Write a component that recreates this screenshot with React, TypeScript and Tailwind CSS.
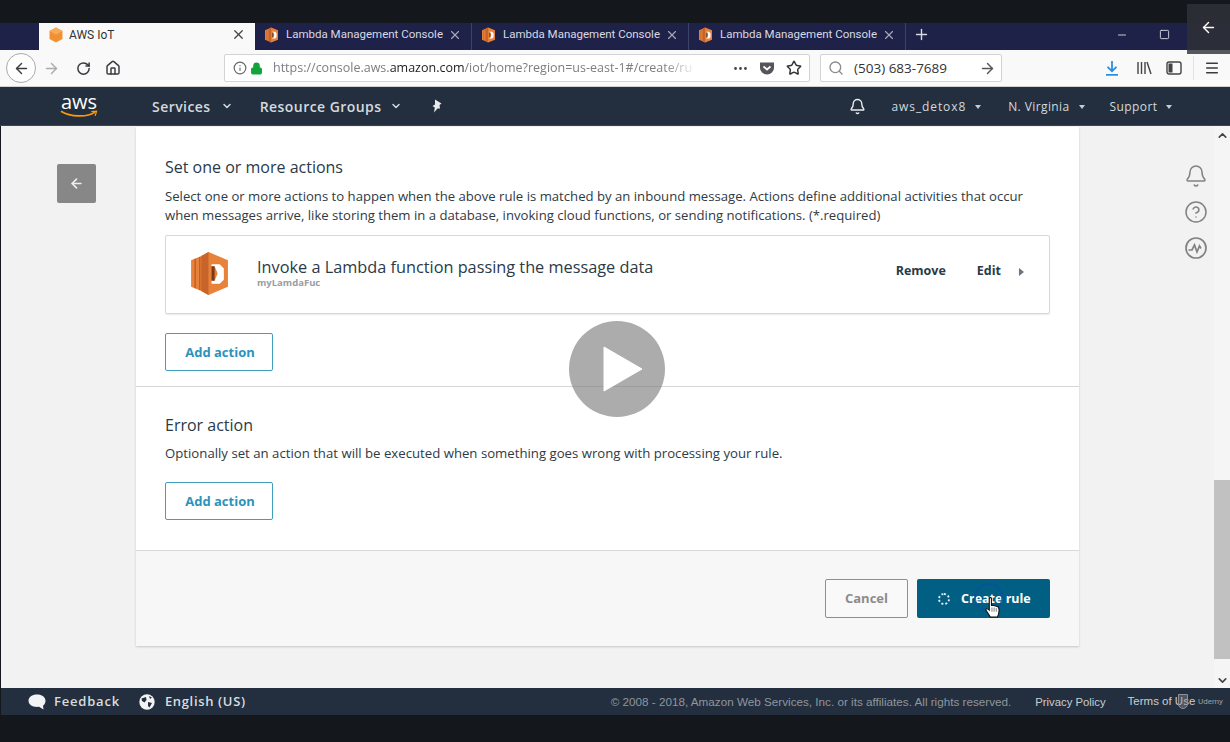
import { ArrowLeft, ArrowRight, Bell, ChevronDown, ChevronUp, HelpCircle, Home, Lock, Menu, MoreHorizontal, Plus, RotateCw, Search, Star, X, Minus, Square, Info } from 'lucide-react';

const ui = "font-['Open_Sans',sans-serif]";
const chrome = "font-['Roboto',sans-serif]";
const legal = "font-['Liberation_Sans',sans-serif]";

function LambdaIcon({ className }: { className?: string }) {
  return (
    <svg viewBox="0 0 36 42" className={className}>
      <path d="M0 8 L10 4 L17 0 L36 8 V34 L17 42 L10 38 L0 34 Z" fill="#e8823a" />
      <path d="M4 6.5 V35.5 M8.5 4.8 V37.2" stroke="#b85a22" strokeWidth="1.2" />
      <path d="M17 0 L10 4 V38 L17 42 Z" fill="#c8642a" />
      <path d="M20 12 H28 L32 16 V27 L28 31 H20 V28 H23 L26 21 L23 14 H20 Z" fill="#fff" />
      <path d="M20 14 H23 V28 H20 Z" fill="#7a3b18" />
    </svg>
  );
}

function BrowserTab({ label }: { label: string }) {
  return (
    <div className="w-[217px] h-full flex items-center pl-[10px] pr-[9px] pb-[4px] border-r border-[#3d4168]">
      <LambdaIcon className="w-[13px] h-[16px] shrink-0" />
      <span className={`ml-[8px] text-[11.5px] text-[#d8d9e2] whitespace-nowrap ${chrome}`}>{label}</span>
      <X size={14} className="ml-auto shrink-0 text-[#a6a8b8]" />
    </div>
  );
}

function NavCaret() {
  return <span className="inline-block ml-[9px] mt-[2px] w-0 h-0 border-x-[3.5px] border-x-transparent border-t-[4px] border-t-[#c8ccd1]" />;
}

function AddAction() {
  return (
    <button className={`w-[108px] h-[38px] pl-[2px] pt-[2px] rounded-[2px] border border-[#3f9fbd] bg-white text-[13px] font-bold text-[#2b93bd] ${ui}`}>
      Add action
    </button>
  );
}

export default function App() {
  return (
    <div className="relative w-[1230px] h-[742px] overflow-hidden bg-[#14171c] flex flex-col">
      {/* Black bar from the video */}
      <div className="h-[23px] shrink-0" />

      {/* Firefox tabs */}
      <div className="h-[27px] shrink-0 bg-[#1e2148] flex items-center">
        <div className="w-[39px]" />
        <div className="w-[216px] h-full bg-[#f9f9fa] flex items-center pl-[9px] pr-[9px] pb-[4px]">
          <svg viewBox="0 0 16 16" className="w-[16px] h-[16px]">
            <path d="M8 0.5 L14.5 4 V12 L8 15.5 L1.5 12 V4 Z" fill="#f29133" />
            <path d="M8 0.5 L14.5 4 L8 7.5 L1.5 4 Z" fill="#f7ab5a" />
          </svg>
          <span className={`ml-[5px] text-[12px] text-[#333] ${chrome}`}>AWS IoT</span>
          <X size={15} className="ml-auto text-[#444]" />
        </div>
        <BrowserTab label="Lambda Management Console" />
        <BrowserTab label="Lambda Management Console" />
        <BrowserTab label="Lambda Management Console" />
        <Plus size={17} className="ml-[7px] mb-[4px] text-[#d8d9e2]" />
        <Minus size={12} className="ml-[186px] mb-[4px] text-[#c9cad6]" />
        <Square size={11} className="ml-[31px] mb-[4px] text-[#d8d9e2]" />
      </div>

      {/* Firefox toolbar */}
      <div className="h-[37px] shrink-0 bg-[#f9f9fa] border-b border-[#cfd0d3] flex items-center text-[#3b3b40]">
        <div className="ml-[6px] w-[30px] h-[30px] rounded-full border border-[#a9a9ad] bg-white flex items-center justify-center">
          <ArrowLeft size={17} />
        </div>
        <ArrowRight size={17} className="ml-[7px] text-[#aaaaae]" />
        <RotateCw size={15} strokeWidth={2.4} className="ml-[16px]" />
        <Home size={16} strokeWidth={2.2} className="ml-[14px]" />
        <div className="ml-[103px] w-[586px] h-[28px] bg-white border border-[#d3d3d6] rounded-[2px] flex items-center pl-[8px]">
          <Info size={14} className="text-[#666]" />
          <Lock size={13} fill="#12a33c" className="ml-[3px] text-[#12a33c]" />
          <span className={`ml-[10px] text-[12.5px] text-[#7d7d82] whitespace-nowrap w-[424px] overflow-hidden [mask-image:linear-gradient(to_right,black_92%,transparent)] ${ui}`}>
            https://console.aws.<span className="text-[#1d1d1f]">amazon.com</span>/iot/home?region=us-east-1#/create/ru
          </span>
          <MoreHorizontal size={17} className="ml-[35px] text-[#444]" />
          <svg viewBox="0 0 16 16" className="ml-[10px] w-[16px] h-[16px]">
            <path d="M1 2.5 H15 V8 A7 6.5 0 0 1 1 8 Z" fill="#55555a" />
            <path d="M4.5 6.5 L8 9.5 L11.5 6.5" fill="none" stroke="#fff" strokeWidth="1.8" />
          </svg>
          <Star size={16} strokeWidth={2.2} className="ml-[11px] text-[#333]" />
        </div>
        <div className="ml-[10px] w-[182px] h-[28px] bg-white border border-[#d3d3d6] rounded-[2px] flex items-center pl-[7px] pr-[5px]">
          <Search size={16} className="text-[#8a8a8e]" />
          <span className={`ml-[10px] text-[13.5px] text-[#333] ${ui}`}>(503) 683-7689</span>
          <ArrowRight size={17} className="ml-auto text-[#555]" />
        </div>
        <svg viewBox="0 0 16 16" className="ml-[102px] w-[16px] h-[16px]" fill="none" stroke="#2b8fe0" strokeWidth="1.8">
          <path d="M8 1 V11 M3.5 6.8 L8 11.2 L12.5 6.8 M2 14.8 H14" />
        </svg>
        <svg viewBox="0 0 16 16" className="ml-[16px] w-[16px] h-[16px]" fill="none" stroke="#444" strokeWidth="1.4">
          <path d="M2 2 V14 M5.5 2 V14 M9 2 V14 M11 2 L15 14" />
        </svg>
        <svg viewBox="0 0 16 16" className="ml-[14px] w-[16px] h-[16px]" fill="none" stroke="#444" strokeWidth="1.4">
          <rect x="1" y="2" width="14" height="12" rx="2" />
          <rect x="2.5" y="3.5" width="4" height="9" fill="#444" stroke="none" />
        </svg>
        <div className="ml-[11px] w-px h-[24px] bg-[#e2e2e4]" />
        <Menu size={16} strokeWidth={2.2} className="ml-[10px]" />
      </div>

      {/* AWS console header */}
      <div className="h-[39px] shrink-0 bg-[#232f3e] border-b border-[#3a4553] flex items-center text-[#d5d9dd]">
        <div className="ml-[59px] w-[40px] flex flex-col items-center">
          <span className={`text-[20px] leading-[16px] text-white ${ui}`}>aws</span>
          <svg viewBox="0 0 40 8" className="w-[38px] h-[8px]">
            <path d="M1 1 C11 7 28 8 37 2" fill="none" stroke="#f90" strokeWidth="1.8" />
            <path d="M33 1.5 L38.5 1 L37 6" fill="none" stroke="#f90" strokeWidth="1.3" />
          </svg>
        </div>
        <span className={`ml-[53px] text-[14px] tracking-[0.45px] font-semibold ${ui}`}>Services</span>
        <ChevronDown size={12} strokeWidth={3} className="ml-[10px]" />
        <span className={`ml-[27px] text-[14px] tracking-[0.45px] font-semibold ${ui}`}>Resource Groups</span>
        <ChevronDown size={12} strokeWidth={3} className="ml-[8px]" />
        <svg viewBox="0 0 14 14" className="ml-[28px] w-[14px] h-[14px]" fill="#e8eaec">
          <path d="M5 0.5 L11.5 4.5 L9.5 6 L10 9.5 L7.5 9.5 L4 13.5 L4.8 8.5 L2.5 7 L5 5.5 Z" />
        </svg>
        <Bell size={17} className="ml-[405px] mt-[1px] text-[#e8eaec]" />
        <span className={`ml-[26px] mt-[2px] text-[12px] tracking-[0.9px] ${ui}`}>aws_detox8</span>
        <NavCaret />
        <span className={`ml-[27px] mt-[2px] text-[12px] tracking-[0.4px] ${ui}`}>N. Virginia</span>
        <NavCaret />
        <span className={`ml-[25px] mt-[2px] text-[12px] tracking-[0.4px] ${ui}`}>Support</span>
        <NavCaret />
      </div>

      {/* Scrolled console page */}
      <div className="h-[562px] shrink-0 bg-[#f2f2f2] border-l border-[#14171c] flex">
        <div className="w-[135px] shrink-0 pt-[38px] pl-[56px]">
          <div className="w-[39px] h-[39px] rounded-[2px] bg-[#878787] flex items-center justify-center">
            <ArrowLeft size={15} strokeWidth={2.6} className="text-[#eee]" />
          </div>
        </div>

        <div className="w-[943px] shrink-0 h-[519px] mt-[1px] bg-white shadow-[0_1px_2px_rgba(0,0,0,0.18)] flex flex-col">
          <section className={`h-[260px] shrink-0 pt-[30px] pl-[29px] pr-[29px] border-b border-[#d5d5d5] ${ui}`}>
            <h2 className="text-[16px] leading-[20px] font-medium text-[#2a3a47]">Set one or more actions</h2>
            <p className="mt-[10px] text-[13.15px] leading-[19px] text-[#2f3a44]">
              Select one or more actions to happen when the above rule is matched by an inbound message. Actions define additional activities that occur when messages arrive, like storing them in a database, invoking cloud functions, or sending notifications. (*.required)
            </p>
            <div className="mt-[10px] h-[79px] rounded-[2px] border border-[#d5d7d9] shadow-[0_1px_1px_rgba(0,0,0,0.08)] flex items-center pl-[25px] pr-[25px]">
              <LambdaIcon className="w-[37px] h-[43px] -mt-[2px]" />
              <div className="ml-[29px] -mt-[3px]">
                <div className="text-[16.3px] leading-[20px] font-medium text-[#2a3a47]">Invoke a Lambda function passing the message data</div>
                <div className="text-[9.5px] leading-[12px] font-bold text-[#9a9da1]">myLamdaFuc</div>
              </div>
              <div className="ml-auto mb-[6px] flex items-center">
                <span className="text-[12.5px] font-bold text-[#2a3a47]">Remove</span>
                <span className="ml-[31px] text-[12.5px] font-bold text-[#2a3a47]">Edit</span>
                <span className="ml-[18px] w-0 h-0 border-y-[4px] border-y-transparent border-l-[5px] border-l-[#6b7680]" />
              </div>
            </div>
            <div className="mt-[19px]"><AddAction /></div>
          </section>

          <section className={`h-[164px] shrink-0 pt-[28px] pl-[29px] pr-[29px] border-b border-[#d8d8d8] ${ui}`}>
            <h2 className="text-[16px] leading-[20px] font-medium text-[#2a3a47]">Error action</h2>
            <p className="mt-[9px] text-[13.2px] leading-[19px] text-[#2f3a44]">
              Optionally set an action that will be executed when something goes wrong with processing your rule.
            </p>
            <div className="mt-[19px]"><AddAction /></div>
          </section>

          <div className={`flex-1 bg-[#f7f7f8] flex justify-end items-start pt-[28px] pr-[29px] gap-[9px] ${ui}`}>
            <button className="w-[83px] h-[39px] rounded-[2px] border border-[#8f8f8f] bg-[#f9f9f9] text-[13px] font-bold text-[#8c8c8c]">Cancel</button>
            <button className="w-[133px] h-[39px] pt-[1px] rounded-[2px] bg-[#005f83] text-[12.5px] font-bold text-white flex items-center pl-[21px]">
              <span className="w-[12px] h-[12px] rounded-full border-2 border-dotted border-[#e6eef2]" />
              <span className="ml-[11px]">Create rule</span>
            </button>
          </div>
        </div>

        <div className="flex-1 flex flex-col items-end pr-[6px] pt-[38px] gap-[12px] text-[#828282]">
          <Bell size={24} strokeWidth={1.5} />
          <HelpCircle size={24} strokeWidth={1.5} />
          <svg viewBox="0 0 24 24" className="w-[24px] h-[24px]" fill="none" stroke="currentColor" strokeWidth="1.7">
            <circle cx="12" cy="12" r="10" />
            <path d="M4.5 14 H8 L10.5 9 L13 16 L15.5 10 L17 12.5" />
          </svg>
        </div>

        {/* Scrollbar */}
        <div className="w-[16px] shrink-0 bg-[#f5f5f6] flex flex-col items-center">
          <ChevronUp size={13} strokeWidth={3} className="mt-[3px] text-[#444]" />
          <div className="mt-[338px] w-full h-[179px] bg-[#c1c1c1]" />
          <ChevronDown size={13} strokeWidth={3} className="mt-[15px] text-[#444]" />
        </div>
      </div>

      {/* Console footer */}
      <div className="h-[27px] shrink-0 pt-[1px] bg-[#232f3e] border-l border-[#14171c] flex items-center">
        <svg viewBox="0 0 18 16" className="ml-[27px] w-[18px] h-[16px]" fill="#f2f3f4">
          <path d="M9 0.5 C14 0.5 17.5 3 17.5 6.8 C17.5 9.5 16 11 15 11.8 L15.5 15.5 L11 12.8 C5 13.5 0.5 11 0.5 6.8 C0.5 3 4 0.5 9 0.5 Z" />
        </svg>
        <span className={`ml-[8px] text-[13px] tracking-[0.8px] font-semibold text-[#d9dcdf] ${ui}`}>Feedback</span>
        <svg viewBox="0 0 16 16" className="ml-[19px] w-[16px] h-[16px]">
          <circle cx="8" cy="8" r="7.7" fill="#f2f3f4" />
          <path d="M2.5 4.5 L7 3 L7.5 6 L5.5 8.5 L3 7 Z M9 8 L13 9 L10.5 13.5 L9 12 Z M10 2 L13 3.5 L11 5 Z" fill="#232f3e" />
        </svg>
        <span className={`ml-[10px] text-[13px] tracking-[0.65px] font-semibold text-[#d9dcdf] ${ui}`}>English (US)</span>
        <span className={`ml-[365px] text-[11.7px] text-[#8f969e] whitespace-nowrap ${legal}`}>© 2008 - 2018, Amazon Web Services, Inc. or its affiliates. All rights reserved.</span>
        <span className={`ml-[24px] text-[11.3px] text-[#c9cdd1] whitespace-nowrap ${legal}`}>Privacy Policy</span>
        <span className={`ml-[22px] text-[11.5px] text-[#c9cdd1] whitespace-nowrap ${legal}`}>Terms of Use</span>
      </div>

      <div className="flex-1" />

      {/* Video player overlays */}
      <div className="absolute left-[569px] top-[321px] w-[96px] h-[96px] rounded-full bg-[#7f7f7f]/65 flex items-center justify-center">
        <svg viewBox="0 0 40 46" className="ml-[12px] w-[40px] h-[46px]">
          <path d="M1 1 L39 23 L1 45 Z" fill="#fff" stroke="#fff" strokeLinejoin="round" />
        </svg>
      </div>
      <div className="absolute left-[1187px] top-[4px] w-[43px] h-[50px] bg-[#2c3036]/90 border-b-[4px] border-[#55585d] flex items-center justify-center">
        <ArrowLeft size={17} className="text-white" />
      </div>
      <div className={`absolute left-[1178px] top-[694px] flex items-center text-[8px] text-[#9ba1a8] ${chrome}`}>
        <span className="w-[10px] h-[15px] mr-[4px] rounded-b-full border border-[#8b9198] bg-[#8b9198]/40" />
        <span className="ml-[6px]">Udemy</span>
      </div>
      {/* Click ring and hand cursor */}
      <div className="absolute left-[974px] top-[583px] w-[29px] h-[29px] rounded-full border-2 border-[#0b4fa0]/70" />
      <svg viewBox="0 0 14 20" className="absolute left-[985px] top-[596px] w-[15px] h-[23px]">
        <path d="M4 1.5 C4 0.5 6 0.5 6 1.5 V8 L8 8 L10 8.5 L12.5 9.5 C13.5 12 13 16 11.5 19 H5 L1 12.5 C0.5 11 2 10.5 4 12.5 Z" fill="#fff" stroke="#111" strokeWidth="1" />
        <path d="M6.5 10 V14 M8.5 10 V14 M10.5 10.5 V14" stroke="#555" strokeWidth="0.7" />
      </svg>
    </div>
  );
}
